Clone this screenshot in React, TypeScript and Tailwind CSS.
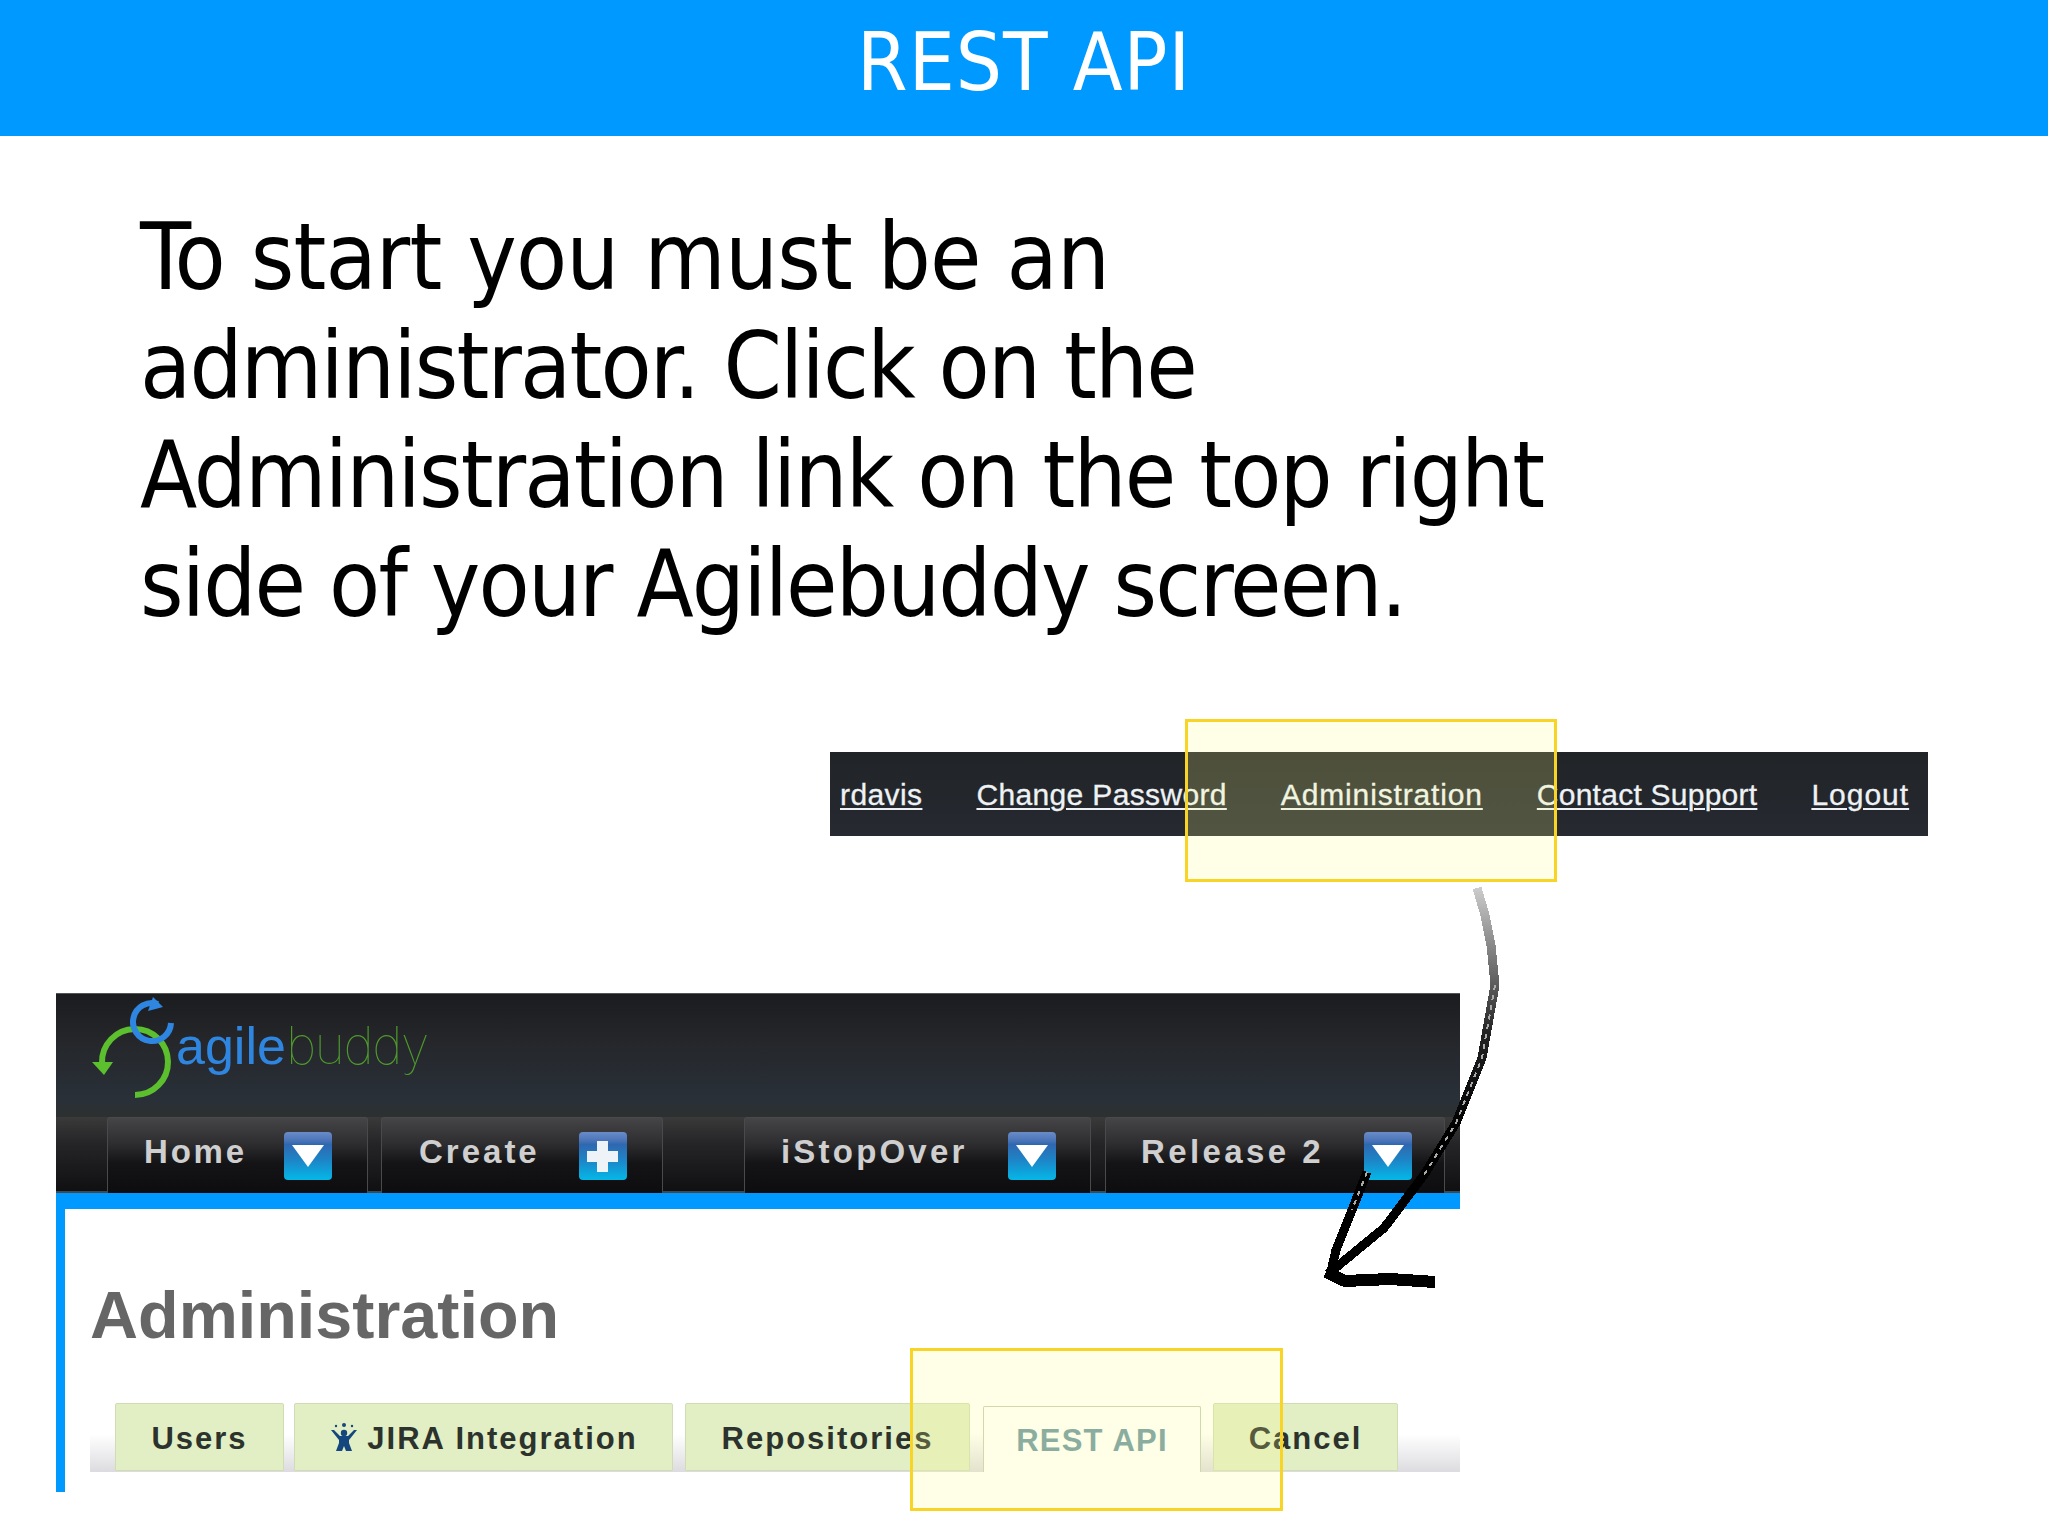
import React from 'react';

const links = [
  { label: 'rdavis', spacing: 'tracking-[0.4px]' },
  { label: 'Change Password', spacing: 'tracking-[0.35px]' },
  { label: 'Administration', spacing: 'tracking-[0.85px]' },
  { label: 'Contact Support', spacing: 'tracking-[0.25px]' },
  { label: 'Logout', spacing: 'tracking-[1px]' },
];

const ArrowDownIcon = () => (
  <svg viewBox="0 0 48 48" className="w-[48px] h-[48px]">
    <path d="M8 13 H40 L24 35 Z" fill="#fff" />
  </svg>
);

const PlusIcon = () => (
  <svg viewBox="0 0 48 48" className="w-[48px] h-[48px]">
    <path d="M18 9 H29 V19 H39 V30 H29 V40 H18 V30 H8 V19 H18 Z" fill="#eef3f8" />
  </svg>
);

const NavButton: React.FC<{
  label: string;
  className: string;
  textClass: string;
  plus?: boolean;
}> = ({ label, className, textClass, plus }) => (
  <div
    className={`relative flex h-[76px] items-center justify-between rounded-t-[3px] border border-b-0 border-[#4a4a4c] bg-[linear-gradient(to_bottom,#454547_0%,#2d2d2f_35%,#141416_60%,#0d0d0f_100%)] ${className}`}
  >
    <span
      className={`whitespace-nowrap pb-[8px] font-['Liberation_Sans',sans-serif] text-[33px] leading-none font-bold text-[#cfcfcf] ${textClass}`}
    >
      {label}
    </span>
    <span className="flex h-[48px] w-[48px] items-center justify-center rounded-[4px] bg-[linear-gradient(to_bottom,#6a8cc8_0%,#4a74b8_18%,#2f68b0_26%,#1c86c8_60%,#04b8e8_100%)]">
      {plus ? <PlusIcon /> : <ArrowDownIcon />}
    </span>
  </div>
);

const Tab: React.FC<{ label: string; className: string; active?: boolean; icon?: boolean }> = ({
  label,
  className,
  active,
  icon,
}) => (
  <div
    className={`flex items-center justify-center rounded-t-[2px] pt-[4px] font-['Liberation_Sans',sans-serif] text-[31px] font-bold whitespace-nowrap ${
      active
        ? 'mt-[3px] h-[66px] border border-b-0 border-[#c9cdb8] bg-white tracking-[1.2px] text-[#6f99a6]'
        : 'h-[68px] border border-[#d2dcb4] bg-[#e2eec4] tracking-[2px] text-[#2c322c]'
    } ${className}`}
  >
    {icon && (
      <svg viewBox="0 0 30 30" className="mr-[8px] mb-[4px] h-[30px] w-[30px]">
        <g fill="#14477e">
          <circle cx="15" cy="3" r="2" />
          <circle cx="7" cy="4" r="1.2" />
          <circle cx="23" cy="4" r="1.2" />
          <circle cx="15" cy="11" r="3.2" />
          <path d="M2 8 L5 8 L11 14 H19 L25 8 L28 8 L20 18 V21 L23 29 H17 L15 24 L13 29 H7 L10 21 V18 Z" />
        </g>
      </svg>
    )}
    {label}
  </div>
);

const HighlightBox: React.FC<{ className: string }> = ({ className }) => (
  <div className={`absolute border-[3px] border-[#f7d425] bg-[#ffff89]/20 ${className}`} />
);

export default function App() {
  return (
    <div className="relative h-[1536px] w-[2048px] overflow-hidden bg-white">
      <div className="flex h-[136px] items-center justify-center bg-[#0099ff] pb-[10px] font-['DejaVu_Sans',sans-serif] text-[81px] tracking-[1px] [font-stretch:condensed] text-white">
        REST API
      </div>

      <div className="h-[616px] pt-[67px] pl-[140px] font-['DejaVu_Sans',sans-serif] text-[93px] leading-[109px] tracking-[-1.8px] [font-stretch:condensed] text-black">
        <p className="tracking-[-0.8px]">To start you must be an</p>
        <p>administrator. Click on the</p>
        <p>Administration link on the top right</p>
        <p>side of your Agilebuddy screen.</p>
      </div>

      <div className="ml-[830px] flex h-[84px] w-[1098px] items-center gap-[54px] bg-[linear-gradient(to_bottom,#212427,#24282e_70%,#272b31)] pl-[10px] font-['Liberation_Sans',sans-serif] text-[30px] text-[#eef2f4] [-webkit-text-stroke:0.3px_#eef2f4]">
        {links.map(link => (
          <span key={link.label} className={`whitespace-nowrap underline decoration-2 underline-offset-[3px] ${link.spacing}`}>
            {link.label}
          </span>
        ))}
      </div>

      <div className="mt-[157px] ml-[56px] w-[1404px]">
        <div className="h-[124px] border-t border-[#555] bg-[linear-gradient(to_bottom,#1b1c1f_0%,#25272b_40%,#293038_85%,#2c3030_100%)]">
          <div className="flex pt-[3px] pl-[36px]">
            <svg viewBox="0 0 84 102" className="h-[102px] w-[84px] shrink-0">
              <path d="M10 66 A33 33 0 1 1 43 98" fill="none" stroke="#5cbf2e" strokeWidth="6" />
              <path d="M0 65 L21 65 L12 78 Z" fill="#5cbf2e" />
              <path d="M79 26 A19 19 0 1 1 66 7" fill="none" stroke="#2f86e0" strokeWidth="6" />
              <path d="M61 0 L71 10 L56 14 Z" fill="#2f86e0" />
            </svg>
            <div className="mt-[11px] flex text-[52px] leading-[76px]">
              <span className="font-['Liberation_Sans',sans-serif] text-[#2f86e0]">agile</span>
              <span className="font-['Inter',sans-serif] tracking-[-1.5px] font-thin text-[#4f9a2c]">buddy</span>
            </div>
          </div>
        </div>
        <div className="flex h-[76px] bg-[linear-gradient(to_bottom,#3a3a3b_0%,#252527_35%,#0f0f11_100%)] pl-[51px] shadow-[inset_0_-2px_0_#3f4a50]">
          <NavButton label="Home" className="w-[261px] pr-[35px] pl-[36px]" textClass="tracking-[2.8px]" />
          <NavButton label="Create" className="ml-[13px] w-[282px] pr-[35px] pl-[37px]" textClass="tracking-[3px]" plus />
          <NavButton label="iStopOver" className="ml-[81px] w-[347px] pr-[34px] pl-[36px]" textClass="tracking-[3.2px]" />
          <NavButton label="Release 2" className="ml-[14px] w-[340px] pr-[32px] pl-[35px]" textClass="tracking-[3.4px]" />
        </div>
        <div className="h-[16px] bg-[#0099ff]" />
        <div className="h-[283px] border-l-[9px] border-[#0099ff] bg-white">
          <h1 className="pt-[68px] pl-[25px] font-['Liberation_Sans',sans-serif] text-[66.5px] leading-[76px] font-bold text-[#666666]">
            Administration
          </h1>
          <div className="mt-[50px] ml-[25px] flex h-[69px] bg-[linear-gradient(to_bottom,#ffffff_0%,#ffffff_45%,#dcdce0_100%)] pl-[25px]">
            <Tab label="Users" className="w-[169px]" />
            <Tab label="JIRA Integration" className="ml-[10px] w-[379px]" icon />
            <Tab label="Repositories" className="ml-[12px] w-[285px]" />
            <Tab label="REST API" className="ml-[13px] w-[218px]" active />
            <Tab label="Cancel" className="ml-[12px] w-[185px]" />
          </div>
        </div>
      </div>

      <HighlightBox className="top-[719px] left-[1185px] h-[163px] w-[372px]" />
      <HighlightBox className="top-[1348px] left-[910px] h-[163px] w-[373px]" />

      {/* hand drawn arrow from the Administration link down to the REST API tab */}
      <svg
        viewBox="0 0 2048 1536"
        className="pointer-events-none absolute top-0 left-0 h-[1536px] w-[2048px]"
        shapeRendering="crispEdges"
      >
        <defs>
          <linearGradient id="arrowFade" gradientUnits="userSpaceOnUse" x1="0" y1="888" x2="0" y2="1130">
            <stop offset="0" stopColor="#cccccc" />
            <stop offset="0.3" stopColor="#777777" />
            <stop offset="0.6" stopColor="#222222" />
            <stop offset="1" stopColor="#000000" />
          </linearGradient>
        </defs>
        <path
          d="M1477 888 L1485 915 L1491 945 L1495 985 L1482 1058 L1456 1123 L1424 1175 L1384 1228 L1328 1274"
          fill="none"
          stroke="url(#arrowFade)"
          strokeWidth="9"
        />
        <path d="M1367 1172 L1352 1210 L1336 1250 L1330 1276" fill="none" stroke="#000" strokeWidth="9" />
        <path d="M1495 985 L1482 1058 L1456 1123 L1424 1175" fill="none" stroke="#aaa" strokeWidth="2" strokeDasharray="5 5" />
        <path d="M1367 1172 L1352 1210" fill="none" stroke="#aaa" strokeWidth="2" strokeDasharray="5 5" />
        <path d="M1326 1272 L1345 1281 L1390 1279 L1435 1282" fill="none" stroke="#000" strokeWidth="12" />
      </svg>
    </div>
  );
}
